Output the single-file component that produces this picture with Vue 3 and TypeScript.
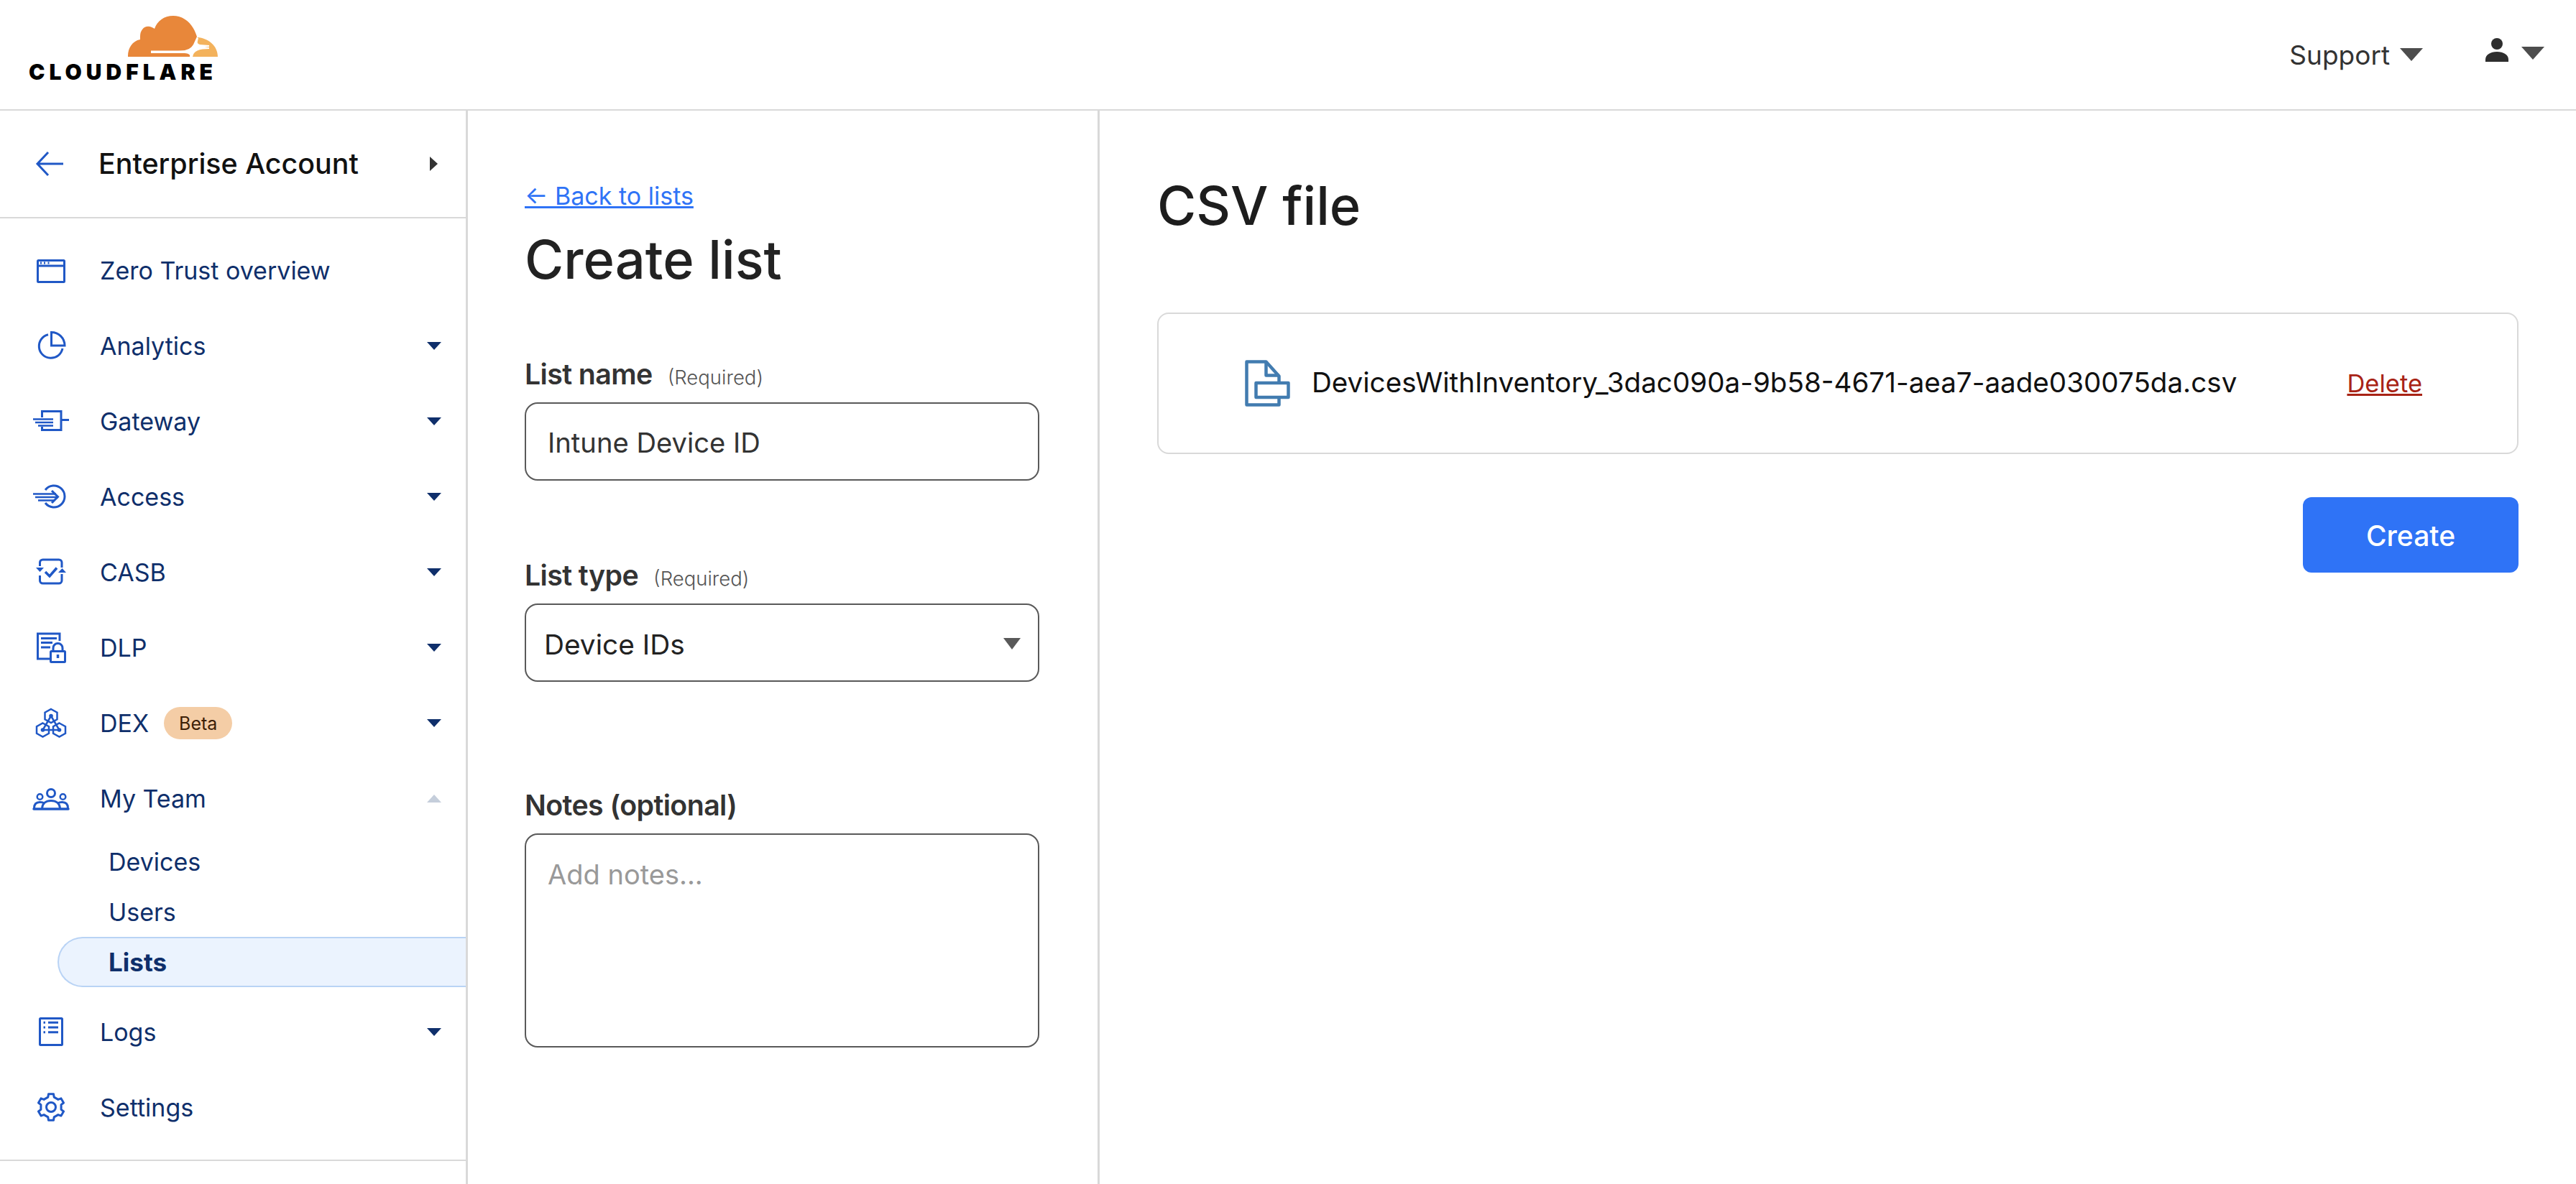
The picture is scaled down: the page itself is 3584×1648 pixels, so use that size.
<script setup lang="ts">
interface NavItem { label: string; icon: string; caret?: boolean; badge?: string; open?: boolean }

const before: NavItem[] = [
  { label: 'Zero Trust overview', icon: 'overview' },
  { label: 'Analytics', icon: 'analytics', caret: true },
  { label: 'Gateway', icon: 'gateway', caret: true },
  { label: 'Access', icon: 'access', caret: true },
  { label: 'CASB', icon: 'casb', caret: true },
  { label: 'DLP', icon: 'dlp', caret: true },
  { label: 'DEX', icon: 'dex', caret: true, badge: 'Beta' },
  { label: 'My Team', icon: 'team', open: true },
]
const subItems = ['Devices', 'Users', 'Lists']
const after: NavItem[] = [
  { label: 'Logs', icon: 'logs', caret: true },
  { label: 'Settings', icon: 'settings' },
]

function hex(cx: number, cy: number): string {
  const w = 8.5, h = 9.5
  return `${cx},${cy - h} ${cx + w},${cy - h / 2} ${cx + w},${cy + h / 2} ${cx},${cy + h} ${cx - w},${cy + h / 2} ${cx - w},${cy - h / 2}`
}

function gear(cx: number, cy: number): string {
  const pts: string[] = []
  for (let i = 0; i < 6; i++) {
    const a = (-90 + i * 60) * Math.PI / 180
    const steps: [number, number][] = [[-17, 14.5], [-11, 18.5], [11, 18.5], [17, 14.5]]
    for (const [off, r] of steps) {
      const t = a + off * Math.PI / 180
      pts.push(`${(cx + r * Math.cos(t)).toFixed(1)},${(cy + r * Math.sin(t)).toFixed(1)}`)
    }
  }
  return pts.join(' ')
}
</script>

<template>
  <div class="page">
    <header class="topbar">
      <div class="logo">
        <svg class="cloud" viewBox="0 0 126 58" width="126" height="58">
          <path fill="#e8873a" d="M1 57 C1 46 7 36 18 34 C18 27 18 24 21 20 C25 14 33 15 38 19 C42 8 51 1 64 1 C80 1 92 13 97 30 L92 41 C88 48 80 50 70 50 L33 51 L33 53 L80 53 C86 53 89 57 88 58 L1 58 Z"/>
          <path fill="#f3b25c" d="M98 31 C112 32 126 42 126 58 L91 58 C92 52 93 49 100 46 L114 44 L114 42 L101 41 C98 40 96 38 98 31 Z"/>
          <path fill="#fff" d="M33 49.5 H86 C90 49.5 92 47 93 42 L97 32 L99 32 L97 40 C99 44 104 45 114 45 L114 47 C100 47 92 50 91 58 L87 58 C88 54 86 53 82 52.5 L33 52.5 Z"/>
        </svg>
        <span class="wordmark">CLOUDFLARE</span>
      </div>
      <div class="top-actions">
        <span class="support">Support</span>
        <i class="top-caret"></i>
        <svg class="person" viewBox="0 0 32 33" width="32" height="33">
          <circle cx="16" cy="8" r="8" fill="#2e2e2e"/>
          <path fill="#2e2e2e" d="M0 33 V30 C0 23 7 19 16 19 C25 19 32 23 32 30 V33 Z"/>
        </svg>
        <i class="top-caret user"></i>
      </div>
    </header>

    <div class="body">
      <aside class="sidebar">
        <div class="account">
          <svg class="back-arrow" viewBox="0 0 40 36" width="40" height="36">
            <path d="M39 18 H3 M18 2 L3 18 L18 34" fill="none" stroke="#2058c6" stroke-width="3"/>
          </svg>
          <span class="account-name">Enterprise Account</span>
          <i class="account-caret"></i>
        </div>

        <nav class="nav">
          <template v-for="item in before" :key="item.label">
            <div class="nav-row">
              <svg class="nav-icon" viewBox="0 0 56 44" width="56" height="44" fill="none" stroke="#2058c6" stroke-width="3">
                <template v-if="item.icon === 'overview'">
                  <rect x="9.5" y="7.5" width="37" height="30" rx="1"/>
                  <path d="M9 15 H47"/>
                  <path d="M13 11 h2 M18 11 h2 M23.500 11 h2"/>
                </template>
                <template v-else-if="item.icon === 'analytics'">
                  <path d="M28.500 2.500 A18.500 18.500 0 0 1 47 21 H28.500 Z"/>
                  <path d="M24 5.800 A16.500 16.500 0 1 0 44 25"/>
                </template>
                <template v-else-if="item.icon === 'gateway'">
                  <path d="M15.500 16 V7.500 H42 V33.500 H15.500 V29"/>
                  <path d="M42 19.500 H53"/>
                  <path d="M3 18.500 H31 M6 23 H31 M10 27.500 H31" stroke-width="2.500"/>
                </template>
                <template v-else-if="item.icon === 'access'">
                  <path d="M20 12 A15 15 0 1 1 20 30"/>
                  <path d="M3 17.500 H35 M6 22 H38 M10 26.500 H33" stroke-width="2.500"/>
                  <path d="M29 13 L37.500 21.500 L29 30"/>
                </template>
                <template v-else-if="item.icon === 'casb'">
                  <path d="M12.500 13 V8 a4 4 0 0 1 4 -4 H39 a4 4 0 0 1 4 4 V15"/>
                  <path d="M12.500 26 V33 a4 4 0 0 0 4 4 H39 a4 4 0 0 0 4 -4 V24"/>
                  <path d="M7 15 H18 L12.500 21 Z M38 22 H49 L43.500 16 Z" fill="#2058c6" stroke="none"/>
                  <path d="M20 21 L26 27 L36 15.500" stroke-width="3.500"/>
                </template>
                <template v-else-if="item.icon === 'dlp'">
                  <path d="M40 12 V2 H9.500 V37 H27"/>
                  <path d="M14 8.500 H36 M14 14.500 H30 M14 21 H27"/>
                  <rect x="27.500" y="26.500" width="20" height="15" rx="1"/>
                  <path d="M31 26 V22 a6.500 6.500 0 0 1 13 0 V26"/>
                  <path d="M37.500 31 V36" stroke-width="3.500"/>
                </template>
                <template v-else-if="item.icon === 'dex'">
                  <polygon :points="hex(28, 11.500)" stroke-width="2.500"/>
                  <polygon :points="hex(16.500, 31)" stroke-width="2.500"/>
                  <polygon :points="hex(39.500, 31)" stroke-width="2.500"/>
                  <path d="M28 11.500 L16.500 31 H39.500 Z" stroke-width="2.500"/>
                  <circle cx="28" cy="11.500" r="2.800" fill="#2058c6" stroke="none"/>
                  <circle cx="16.500" cy="31" r="2.800" fill="#2058c6" stroke="none"/>
                  <circle cx="39.500" cy="31" r="2.800" fill="#2058c6" stroke="none"/>
                </template>
                <template v-else-if="item.icon === 'team'">
                  <circle cx="28" cy="14" r="5.500"/>
                  <circle cx="12.500" cy="19" r="3.800" stroke-width="2.500"/>
                  <circle cx="44.500" cy="19" r="3.800" stroke-width="2.500"/>
                  <path d="M15.500 35 C16 28 21 24.500 28 24.500 C35 24.500 40 28 40.500 35"/>
                  <path d="M4.500 35 C4.500 29 8 26.500 12.500 26.500 C15 26.500 17 27 18.500 28 M51.500 35 C51.500 29 48 26.500 43.500 26.500 C41 26.500 39 27 37.500 28"/>
                  <path d="M4 36 H52" stroke-width="3.500" stroke-linecap="round"/>
                </template>
              </svg>
              <span class="nav-label">{{ item.label }}</span>
              <span v-if="item.badge" class="badge">{{ item.badge }}</span>
              <i v-if="item.caret" class="nav-caret"></i>
              <i v-if="item.open" class="nav-caret up"></i>
            </div>
          </template>

          <div class="sub-list">
            <a v-for="s in subItems" :key="s" class="sub-row" :class="{ active: s === 'Lists' }">{{ s }}</a>
          </div>

          <div v-for="item in after" :key="item.label" class="nav-row">
            <svg class="nav-icon" viewBox="0 0 56 44" width="56" height="44" fill="none" stroke="#2058c6" stroke-width="3">
              <template v-if="item.icon === 'logs'">
                <rect x="12.500" y="2.500" width="31" height="37" rx="1"/>
                <path d="M24 8.300 H38 M24 15 H38 M24 21.700 H38"/>
                <path d="M17.500 8.300 h2.500 M17.500 15 h2.500 M17.500 21.700 h2.500"/>
              </template>
              <template v-else>
                <polygon :points="gear(28, 21)" stroke-linejoin="round"/>
                <circle cx="28" cy="21" r="6.500"/>
              </template>
            </svg>
            <span class="nav-label">{{ item.label }}</span>
            <i v-if="item.caret" class="nav-caret"></i>
          </div>
        </nav>
        <div class="side-rule"></div>
      </aside>

      <section class="form-panel">
        <a class="back-link">← Back to lists</a>
        <h1 class="title">Create list</h1>

        <div class="label-row first">
          <label class="field-label">List name</label>
          <span class="req">(Required)</span>
        </div>
        <input class="control text" type="text" value="Intune Device ID" readonly />

        <div class="label-row second">
          <label class="field-label">List type</label>
          <span class="req">(Required)</span>
        </div>
        <div class="select-wrap">
          <select class="control select">
            <option>Device IDs</option>
          </select>
          <i class="select-caret"></i>
        </div>

        <div class="label-row third">
          <label class="field-label notes">Notes (optional)</label>
        </div>
        <textarea class="control area" placeholder="Add notes..."></textarea>
      </section>

      <main class="csv-panel">
        <h2 class="csv-title">CSV file</h2>
        <div class="file-card">
          <svg class="file-icon" viewBox="0 0 65 65" width="65" height="65" fill="none" stroke="#427cb0" stroke-width="4.500" stroke-linejoin="round">
            <path d="M47.500 30 V22.500 L29.500 2.500 H2.500 V62.500 H47.500 V54"/>
            <path d="M29.500 2.500 V21.500 H47.500"/>
            <rect x="15.500" y="32" width="45" height="20"/>
          </svg>
          <span class="file-name">DevicesWithInventory_3dac090a-9b58-4671-aea7-aade030075da.csv</span>
          <a class="delete">Delete</a>
        </div>
        <div class="actions">
          <button class="create">Create</button>
        </div>
      </main>
    </div>
  </div>
</template>

<style scoped>
.page {
  width: 3584px;
  height: 1648px;
  overflow: hidden;
  background: #fff;
  font-family: Inter, "Liberation Sans", sans-serif;
  display: flex;
  flex-direction: column;
}
.topbar {
  height: 154px;
  box-sizing: border-box;
  border-bottom: 2px solid #d9d9d9;
  flex: none;
  display: flex;
  justify-content: space-between;
  padding: 0 44px 0 40px;
}
.logo {
  width: 263px;
  padding-top: 21px;
  display: flex;
  flex-direction: column;
  align-items: flex-end;
}
.cloud { display: block; }
.wordmark {
  margin-top: 3px;
  width: 263px;
  font-size: 30px;
  line-height: 36px;
  font-weight: 900;
  color: #000;
  letter-spacing: 6px;
  white-space: nowrap;
}
.top-actions {
  display: flex;
  align-items: flex-start;
  padding-top: 53px;
}
.support {
  font-size: 37px;
  line-height: 48px;
  color: #333;
}
.top-caret {
  width: 0;
  height: 0;
  margin: 14px 0 0 14px;
  border-left: 16px solid transparent;
  border-right: 16px solid transparent;
  border-top: 18px solid #4d4d4d;
}
.person { margin-left: 87px; }
.top-caret.user { margin: 12px 0 0 18px; }

.body { flex: 1; display: flex; min-height: 0; }

.sidebar {
  width: 651px;
  flex: none;
  box-sizing: border-box;
  border-right: 3px solid #d9d9d9;
}
.account {
  height: 150px;
  box-sizing: border-box;
  border-bottom: 2px solid #d9d9d9;
  display: flex;
  align-items: center;
  padding: 0 39px 0 49px;
}
.back-arrow { flex: none; margin-right: 48px; }
.account-name {
  flex: 1;
  font-size: 39.400px;
  font-weight: 500;
  color: #111;
  white-space: nowrap;
}
.account-caret {
  width: 0; height: 0;
  border-top: 10px solid transparent;
  border-bottom: 10px solid transparent;
  border-left: 11px solid #333;
}
.nav { padding-top: 20px; }
.nav-row {
  height: 105px;
  display: flex;
  align-items: center;
  padding: 0 34px 0 43px;
}
.nav-icon { flex: none; margin-right: 40px; overflow: visible; }
.nav-label {
  font-size: 34px;
  color: #0f2f6b;
  white-space: nowrap;
}
.badge {
  margin-left: 21px;
  width: 95px;
  height: 45px;
  border-radius: 23px;
  background: #f4cda6;
  color: #3c2007;
  font-size: 25px;
  display: flex;
  align-items: center;
  justify-content: center;
}
.nav-caret {
  margin-left: auto;
  width: 0; height: 0;
  border-left: 10.5px solid transparent;
  border-right: 10.5px solid transparent;
  border-top: 11px solid #0f2f6b;
}
.nav-caret.up {
  border-top: none;
  border-bottom: 11px solid #c5cedb;
}
.sub-list { margin-bottom: 10px; }
.sub-row {
  display: flex;
  align-items: center;
  height: 70px;
  box-sizing: border-box;
  padding-left: 151px;
  font-size: 34px;
  color: #0f2f6b;
}
.sub-row.active {
  margin-left: 80px;
  padding-left: 69px;
  border: 2px solid #b9d3f5;
  border-right: none;
  border-radius: 35px 0 0 35px;
  background: #ebf3fe;
  font-weight: 700;
  font-size: 35px;
}
.side-rule { margin-top: 20px; border-top: 2px solid #d9d9d9; }

.form-panel {
  width: 879px;
  flex: none;
  box-sizing: border-box;
  border-right: 3px solid #d9d9d9;
  padding: 97px 0 0 79px;
  display: flex;
  flex-direction: column;
  align-items: flex-start;
}
.back-link {
  font-size: 34px;
  line-height: 44px;
  color: #2f73f6;
  text-decoration: underline;
}
.title {
  margin: 20px 0 0;
  font-size: 74px;
  line-height: 92px;
  font-weight: 500;
  color: #222;
}
.label-row {
  display: flex;
  align-items: baseline;
  gap: 21px;
  height: 48px;
  line-height: 48px;
  margin-bottom: 15px;
}
.label-row.first { margin-top: 90px; }
.label-row.second { margin-top: 108px; }
.label-row.third { margin-top: 148px; }
.field-label {
  font-size: 39.300px;
  font-weight: 600;
  color: #333;
  letter-spacing: -0.6px;
}
.req {
  font-size: 27.500px;
  font-weight: 300;
  color: #555;
}
.control {
  display: block;
  width: 716px;
  box-sizing: border-box;
  border: 2px solid #595959;
  border-radius: 18px;
  background: #fff;
  font-family: inherit;
  margin: 0;
  outline: none;
}
.text {
  height: 109px;
  padding: 3px 30px 0;
  font-size: 38.200px;
  color: #333;
}
.select-wrap { position: relative; }
.select {
  height: 109px;
  padding: 3px 25px 0;
  font-size: 38.800px;
  color: #222;
  appearance: none;
  -webkit-appearance: none;
}
.select-caret {
  position: absolute;
  right: 26px;
  top: 48px;
  width: 0; height: 0;
  border-left: 12px solid transparent;
  border-right: 12px solid transparent;
  border-top: 16px solid #595959;
}
.area {
  height: 298px;
  padding: 31px 30px;
  font-size: 38px;
  line-height: 48px;
  resize: none;
}
.area::placeholder { color: #999; }

.csv-panel {
  flex: 1;
  min-width: 0;
  box-sizing: border-box;
  padding: 0 80px 0 80px;
}
.csv-title {
  margin: 86px 0 0;
  font-size: 74px;
  line-height: 92px;
  font-weight: 500;
  color: #1d1d1d;
}
.file-card {
  margin-top: 103px;
  height: 197px;
  box-sizing: border-box;
  border: 2px solid #d9d9d9;
  border-radius: 16px;
  display: flex;
  align-items: center;
  padding: 0 132px 0 120px;
}
.file-icon { flex: none; margin-right: 28px; }
.file-name {
  flex: 1;
  font-size: 38.600px;
  color: #111;
  white-space: nowrap;
  margin-bottom: 3px;
}
.delete {
  font-size: 34.500px;
  color: #a82315;
  text-decoration: underline;
}
.actions { display: flex; justify-content: flex-end; margin-top: 60px; }
.create {
  width: 300px;
  height: 105px;
  border: none;
  border-radius: 12px;
  background: #2f73f6;
  color: #fff;
  font-family: inherit;
  font-size: 39px;
  font-weight: 500;
  padding: 2px 0 0;
}
</style>
